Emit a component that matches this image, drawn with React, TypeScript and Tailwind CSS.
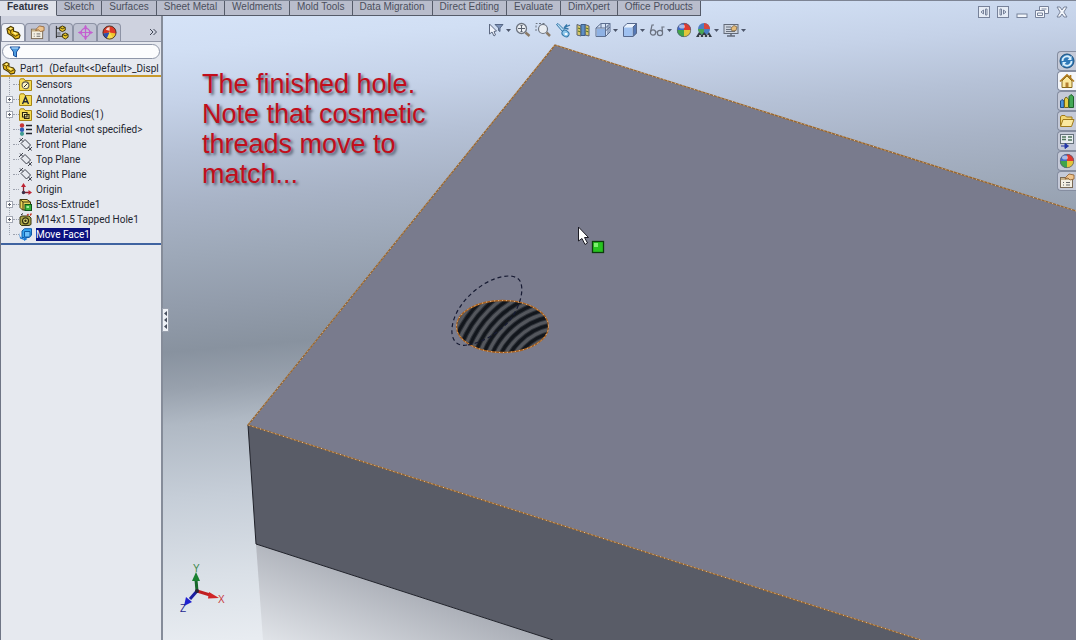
import React, { useState } from "react";

const Tabs = [
  "Features",
  "Sketch",
  "Surfaces",
  "Sheet Metal",
  "Weldments",
  "Mold Tools",
  "Data Migration",
  "Direct Editing",
  "Evaluate",
  "DimXpert",
  "Office Products",
];

type IconProps = { className?: string };

const PartIcon = ({ className = "w-4 h-4" }: IconProps) => (
  <svg viewBox="0 0 16 16" className={className} aria-hidden="true">
    <path d="M1 4 L5 1.500 L8 3 L8 6.500 L13 8 L15 11 L14 14 L10 15 L7 12 L2 9 Z" fill="#e8b91c" stroke="#4a3a08" strokeWidth="1.2" />
    <path d="M2 4.500 L5 6 L8 4 M5 6 L5 9 L10 12 L14 10" fill="none" stroke="#4a3a08" strokeWidth="1" />
    <path d="M3 4 L5 2.700 L7 3.500 L5 4.800 Z M7 8 L9 7.500 L12 9 L10 10.500 Z" fill="#fff08a" />
  </svg>
);

const PropertyIcon = ({ className = "w-4 h-4" }: IconProps) => (
  <svg viewBox="0 0 16 16" className={className} aria-hidden="true">
    <rect x="1.500" y="4.500" width="12" height="10" fill="#f4efe2" stroke="#7b6a55" />
    <path d="M2 5 H13 V7 H2 Z" fill="#c9b48c" />
    <path d="M4 9.500 H5 M7 9.500 H11 M4 12 H5 M7 12 H11" stroke="#666" />
    <path d="M7 4 L10 1 L15 2 L15 6 L11 7 L9 5 L6 6 Z" fill="#eec48e" stroke="#8b5a2b" strokeWidth=".8" />
  </svg>
);

const ConfigIcon = ({ className = "w-4 h-4" }: IconProps) => (
  <svg viewBox="0 0 16 16" className={className} aria-hidden="true">
    <path d="M2.500 1 V14 M2.500 3.500 H6 M2.500 12 H9" stroke="#222" fill="none" />
    <path d="M6 2.500 L9 1 L12 2.500 V5.500 L9 7 L6 5.500 Z" fill="#e8c52a" stroke="#3b3208" />
    <path d="M9 10 L12 8.500 L15 10 V13 L12 15 L9 13 Z" fill="#e8c52a" stroke="#3b3208" />
    <path d="M6 2.500 L9 4 L12 2.500 M9 10 L12 11.500 L15 10" fill="none" stroke="#3b3208" />
    <path d="M3.500 7.500 H7 V10.500 H3.500 Z" fill="#8c8f98" />
  </svg>
);

const TargetIcon = ({ className = "w-4 h-4" }: IconProps) => (
  <svg viewBox="0 0 16 16" className={className} fill="none" stroke="#c45fd0" aria-hidden="true">
    <circle cx="8" cy="8" r="4.500" strokeWidth="1.300" />
    <path d="M8 .5 V15.500 M.5 8 H15.500" strokeWidth="1.300" />
    <path d="M8 0 L6 3 H10 Z M8 16 L6 13 H10 Z M0 8 L3 6 V10 Z M16 8 L13 6 V10 Z" fill="#c45fd0" stroke="none" />
  </svg>
);

const BallIcon = ({ className = "w-4 h-4" }: IconProps) => (
  <svg viewBox="0 0 16 16" className={className} aria-hidden="true">
    <circle cx="8" cy="8" r="7" fill="#4169c8" />
    <path d="M8 8 L8 1 A7 7 0 0 1 15 8 Z" fill="#df3a30" />
    <path d="M8 8 L15 8 A7 7 0 0 1 8 15 Z" fill="#e3c53a" />
    <path d="M8 8 L8 15 A7 7 0 0 1 1 8 Z" fill="#3fa54a" />
    <circle cx="8" cy="8" r="6.700" fill="none" stroke="#5b5f70" strokeWidth=".7" />
    <ellipse cx="6" cy="4.500" rx="3" ry="2" fill="#fff" opacity=".55" />
  </svg>
);

const DisplayIcon = ({ className = "w-4 h-4" }: IconProps) => (
  <svg viewBox="0 0 16 16" className={className} aria-hidden="true">
    <circle cx="8" cy="8" r="7" fill="#f0c62c" />
    <path d="M8 8 L8 1 A7 7 0 0 1 15 9 Z" fill="#e03a28" />
    <path d="M8 8 L1 9 A7 7 0 0 1 8 1 Z" fill="#d63324" />
    <path d="M8 7 L12 14 A7 7 0 0 1 4 14 Z" fill="#f7dc4c" />
    <path d="M1 9 A7 7 0 0 0 5 14.500 L8 8 Z" fill="#2c4fae" />
    <path d="M4 5 A5 5 0 0 1 8 2 L8 6 Z" fill="#fff" opacity=".8" />
    <circle cx="8" cy="8" r="7" fill="none" stroke="#3c2a2a" strokeWidth=".9" />
  </svg>
);

const Folder = ({ children }: { children?: React.ReactNode }) => (
  <svg viewBox="0 0 13 13" className="w-[13px] h-[13px]" aria-hidden="true">
    <path d="M.5 2.500 V12.500 H12.500 V2.500 H6 L5 .8 H1.500 Z" fill="#f5dc55" stroke="#a58413" />
    {children}
  </svg>
);

const SensorsIcon = () => (
  <Folder>
    <circle cx="6.500" cy="7.300" r="3.400" fill="#fff7c8" stroke="#5d5a52" strokeWidth="1.100" />
    <path d="M5 9 L8.500 5.500" stroke="#222" />
  </Folder>
);

const AnnotationsIcon = () => (
  <Folder>
    <path d="M3.500 11 L6.500 4 L9.500 11 M4.500 8.700 H8.500" fill="none" stroke="#20263a" strokeWidth="1.400" />
  </Folder>
);

const BodiesIcon = () => (
  <Folder>
    <path d="M3.500 4.500 H8 V9 H3.500 Z M5.500 6.500 H10 V10.500 H5.500 Z" fill="#f8eda0" stroke="#2a2410" strokeWidth="1.100" />
  </Folder>
);

const MaterialIcon = () => (
  <svg viewBox="0 0 13 13" className="w-[13px] h-[13px]" aria-hidden="true">
    <circle cx="3" cy="2.500" r="2.200" fill="#c93434" />
    <circle cx="3" cy="6.700" r="2.200" fill="#2f58b8" />
    <circle cx="3" cy="10.800" r="2.100" fill="#3f9c93" />
    <path d="M7 2.500 H13 M7 6.500 H13 M7 10.500 H13" stroke="#22252e" strokeWidth="1.500" />
  </svg>
);

const PlaneIcon = () => (
  <svg viewBox="0 0 13 13" className="w-[13px] h-[13px]" fill="none" stroke="#3b3f4a" aria-hidden="true">
    <path d="M2 5.500 L6 1.500 L11.500 7 L7.500 11 Z" />
    <path d="M0 4 L4 0 M1 .5 L4 3.500 M9 13 L13 9 M9.500 9 L12.500 12.500" />
  </svg>
);

const OriginIcon = () => (
  <svg viewBox="0 0 13 13" className="w-[13px] h-[13px]" aria-hidden="true">
    <path d="M4.500 9.500 V3 M4.500 9.500 H10" stroke="#8c2230" strokeWidth="1.300" />
    <path d="M4.500 0 L2 4 H7 Z M13 9.500 L9.500 7 V12 Z" fill="#c02434" />
    <circle cx="4.500" cy="9.500" r="1.700" fill="#3c3048" />
  </svg>
);

const ExtrudeIcon = () => (
  <svg viewBox="0 0 13 13" className="w-[13px] h-[13px]" aria-hidden="true">
    <path d="M1 1.500 H8 L11.500 4 V12 H3.500 L1 9.500 Z" fill="#ead65a" stroke="#40380c" />
    <path d="M1 1.500 L4 4 H11.500 M4 4 V12" fill="none" stroke="#40380c" />
    <rect x="6" y="6.500" width="6.500" height="6" fill="#38b13c" stroke="#10561a" />
    <rect x="7.500" y="8" width="2.500" height="2" fill="#a8f0a0" />
  </svg>
);

const HoleIcon = () => (
  <svg viewBox="0 0 13 13" className="w-[13px] h-[13px]" aria-hidden="true">
    <path d="M1 4 L3 3 H10 L12 5 V11.500 L10 12.500 H2.500 L1 11 Z" fill="#a9a344" stroke="#393612" />
    <circle cx="6.500" cy="7.800" r="3" fill="#dcd873" stroke="#2f2d12" strokeWidth="1.200" />
    <circle cx="6.500" cy="7.800" r="1.200" fill="#2f2d12" />
    <path d="M8 2.500 L9.500 1 M11 2.500 L12.500 .5" stroke="#c23522" strokeWidth="1.300" />
    <path d="M2 2 L4 .5" stroke="#222" />
  </svg>
);

const MoveFaceIcon = () => (
  <svg viewBox="0 0 13 13" className="w-[13px] h-[13px]" aria-hidden="true">
    <path d="M3 3 L5.500 .7 H12.500 V7 L10 9.500 H3 Z" fill="#35a5ee" stroke="#0f5ca8" />
    <path d="M5.500 3.500 H11 V9 H5.500 Z" fill="#6cc0fa" stroke="#0f5ca8" />
    <path d="M0 4.500 L1.500 9 L5 10.500 V8.500 L8.500 11 L5 13 V12 L1 10.500 Z" fill="#1c7ad2" />
  </svg>
);

const TreeItems = [
  { id: 1, title: "Sensors", icon: SensorsIcon },
  { id: 2, title: "Annotations", icon: AnnotationsIcon, expand: true },
  { id: 3, title: "Solid Bodies(1)", icon: BodiesIcon, expand: true },
  { id: 4, title: "Material <not specified>", icon: MaterialIcon },
  { id: 5, title: "Front Plane", icon: PlaneIcon },
  { id: 6, title: "Top Plane", icon: PlaneIcon },
  { id: 7, title: "Right Plane", icon: PlaneIcon },
  { id: 8, title: "Origin", icon: OriginIcon },
  { id: 9, title: "Boss-Extrude1", icon: ExtrudeIcon, expand: true },
  { id: 10, title: "M14x1.5 Tapped Hole1", icon: HoleIcon, expand: true },
  { id: 11, title: "Move Face1", icon: MoveFaceIcon },
];

const PanelTabs = [
  { title: "FeatureManager", icon: PartIcon },
  { title: "PropertyManager", icon: PropertyIcon },
  { title: "ConfigurationManager", icon: ConfigIcon },
  { title: "DimXpertManager", icon: TargetIcon },
  { title: "DisplayManager", icon: DisplayIcon },
];

/* heads-up view toolbar */
const SelectFilter = () => (
  <svg viewBox="0 0 16 16" className="w-4 h-4" aria-hidden="true">
    <path d="M1.500 2 V12 L4 10 L6 14 L7.500 13 L6 9.500 L8.500 9 Z" fill="#eef2fa" stroke="#5c6880" />
    <path d="M7 2.500 H15 L12 6 V9.500 L10.500 8.500 V6 Z" fill="#7e93b8" stroke="#4d5d7c" strokeWidth=".9" />
  </svg>
);

const ZoomFit = () => (
  <svg viewBox="0 0 16 16" className="w-4 h-4" aria-hidden="true">
    <circle cx="6.500" cy="6.500" r="5" fill="#e9edf2" stroke="#6d7480" strokeWidth="1.300" />
    <path d="M6.500 3 V10 M3 6.500 H10 M5.500 4 L6.500 3 L7.500 4 M5.500 9 L6.500 10 L7.500 9" fill="none" stroke="#59616e" />
    <path d="M10.500 10.500 L14.500 14" stroke="#8b7a66" strokeWidth="2.500" />
  </svg>
);

const ZoomArea = () => (
  <svg viewBox="0 0 16 16" className="w-4 h-4" aria-hidden="true">
    <path d="M1 9 V1.500 H11" fill="none" stroke="#6d7480" strokeDasharray="2 1.500" />
    <circle cx="8" cy="7" r="4.500" fill="#e9edf2" stroke="#6d7480" strokeWidth="1.200" />
    <path d="M11.500 10.500 L15 14" stroke="#8b7a66" strokeWidth="2.500" />
  </svg>
);

const PreviousView = () => (
  <svg viewBox="0 0 16 16" className="w-4 h-4" aria-hidden="true">
    <path d="M1.500 2.500 L3 1.500 L9 7.500 L7.500 9.500 Z" fill="#b9def4" stroke="#3376a8" />
    <ellipse cx="10.500" cy="11.500" rx="3.700" ry="3" fill="#8fc8ec" stroke="#3376a8" transform="rotate(35 10.500 11.500)" />
    <ellipse cx="11" cy="12" rx="1.500" ry="1" fill="#fff" />
    <path d="M15 3 L9.500 5.500 M9 6 L12 2.500 M9 6 L13.500 7" fill="none" stroke="#3376a8" strokeWidth="1.300" />
  </svg>
);

const SectionView = () => (
  <svg viewBox="0 0 16 16" className="w-4 h-4" aria-hidden="true">
    <path d="M2 2.500 L6 4 V14 L2 13 Z M10 2.500 L14 4 V14 L10 13 Z" fill="#d6c66a" stroke="#5a6270" />
    <path d="M6 2.500 H10 V13.500 H6 Z" fill="#5f8fc4" stroke="#3e5d88" />
    <path d="M11 6 L13.500 7 M11 9 L13.500 10 M3 6 L5.500 7 M3 9 L5.500 10" stroke="#53721f" />
  </svg>
);

const ViewOrientation = () => (
  <svg viewBox="0 0 16 16" className="w-4 h-4" aria-hidden="true">
    <path d="M1 6 L6 1.500 H15 V10 L10.500 14.500 H1 Z" fill="#d5e2f5" stroke="#5d6f90" />
    <path d="M1 6 H10.500 V14.500 M10.500 6 L15 1.500 M6 1.500 V6 M10.500 9 L15 5 M10.500 1.500 V6 M13 3.500 V12" fill="none" stroke="#5d6f90" />
    <rect x="2" y="7" width="8" height="7" fill="#8fb2e4" />
  </svg>
);

const DisplayStyle = () => (
  <svg viewBox="0 0 16 16" className="w-4 h-4" aria-hidden="true">
    <path d="M1.500 5 L5 1.500 H14.500 V11 L11 14.500 H1.500 Z" fill="#e8f1fd" stroke="#56688c" />
    <path d="M11 5 L14.500 1.500 V11 L11 14.500 Z" fill="#5578b5" stroke="#56688c" />
    <rect x="2" y="5.500" width="8.500" height="8.500" fill="#9fc1f0" />
  </svg>
);

const HideShow = () => (
  <svg viewBox="0 0 16 16" className="w-4 h-4" fill="none" stroke="#6b7280" strokeWidth="1.200" aria-hidden="true">
    <circle cx="4" cy="10.500" r="2.600" />
    <circle cx="11" cy="11" r="2.600" />
    <path d="M6.500 10 H8.500 M1.500 10 L3 3 L5 3 M13.500 10 L13 5 L15.500 5" />
  </svg>
);

const SceneIcon = () => (
  <svg viewBox="0 0 16 16" className="w-4 h-4" aria-hidden="true">
    <circle cx="8" cy="7" r="6" fill="#4a7fc4" />
    <path d="M8 7 V1 A6 6 0 0 1 14 7 Z" fill="#d8483e" />
    <path d="M2 7 A6 6 0 0 0 8 13 V7 Z" fill="#4aa552" />
    <path d="M0 15 L3 10 L6 13 L8 10 L11 13 L13 10 L16 15 Z" fill="#353d46" />
    <path d="M3 14 H5 M7 14 H9 M11 14 H13" stroke="#e5eaf0" strokeWidth="1.500" />
  </svg>
);

const ViewSettings = () => (
  <svg viewBox="0 0 16 16" className="w-4 h-4" aria-hidden="true">
    <rect x="1" y="2.500" width="14" height="9" fill="#ced5e0" stroke="#626a78" />
    <path d="M3 5 H8 M3 7.500 H8 M3 9.500 H12" stroke="#69717e" />
    <path d="M8 6 L11 3.500 L14 5 L13 8.500 L9 9 Z" fill="#e6bd7c" stroke="#7c6440" strokeWidth=".8" />
    <path d="M4 14 H12 M8 12 V14" stroke="#626a78" strokeWidth="1.500" />
  </svg>
);

const ViewTools = [
  { title: "Selection Filter", icon: SelectFilter, menu: true },
  { title: "Zoom to Fit", icon: ZoomFit },
  { title: "Zoom to Area", icon: ZoomArea },
  { title: "Previous View", icon: PreviousView },
  { title: "Section View", icon: SectionView },
  { title: "View Orientation", icon: ViewOrientation, menu: true },
  { title: "Display Style", icon: DisplayStyle, menu: true },
  { title: "Hide/Show Items", icon: HideShow, menu: true },
  { title: "Edit Appearance", icon: BallIcon },
  { title: "Apply Scene", icon: SceneIcon, menu: true },
  { title: "View Settings", icon: ViewSettings, menu: true },
];

/* task pane */
const ResourcesIcon = () => (
  <svg viewBox="0 0 16 16" className="w-4 h-4" aria-hidden="true">
    <circle cx="8" cy="8" r="7" fill="#2f79b8" stroke="#1d527f" />
    <path d="M3.500 8 A4.500 4.500 0 0 1 11 4.500 M12.500 8 A4.500 4.500 0 0 1 5 11.500" fill="none" stroke="#d9effc" strokeWidth="1.800" />
    <path d="M12.500 2.500 V7 H8.500 Z M3.500 13.500 V9 H7.500 Z" fill="#d9effc" />
  </svg>
);

const HomeIcon = () => (
  <svg viewBox="0 0 16 16" className="w-4 h-4" aria-hidden="true">
    <path d="M3 8 V14.500 H13 V8 L8 3 Z" fill="#fbe9a0" stroke="#8a6a1c" />
    <path d="M1 8.500 L8 2 L15 8.500 M11.500 2 V5" fill="none" stroke="#b07b1e" strokeWidth="1.700" />
    <path d="M6.500 14 V9.500 H9.500 V14" fill="#b58032" />
  </svg>
);

const LibraryIcon = () => (
  <svg viewBox="0 0 16 16" className="w-4 h-4" aria-hidden="true">
    <path d="M1.500 8 L3 6.500 L5 8 V14.500 H1.500 Z" fill="#4b93d8" stroke="#1f4f86" />
    <path d="M5.500 6 L7 4 L9.500 6 V14.500 H5.500 Z" fill="#e5cf48" stroke="#75641a" />
    <path d="M10 3.500 L12 1.500 L14.500 3.500 V14.500 H10 Z" fill="#43a856" stroke="#1c6229" />
  </svg>
);

const ExplorerIcon = () => (
  <svg viewBox="0 0 16 16" className="w-4 h-4" aria-hidden="true">
    <path d="M1.500 13 V3.500 L3 2.500 H6 L7.500 4 H13 V6" fill="#f3d774" stroke="#a07a1a" />
    <path d="M1.500 13.500 L4 6.500 H15 L12.500 13.500 Z" fill="#fbe9a0" stroke="#a07a1a" />
  </svg>
);

const PaletteIcon = () => (
  <svg viewBox="0 0 16 16" className="w-4 h-4" aria-hidden="true">
    <rect x="1.500" y="1.500" width="13" height="9" fill="#e7ecf0" stroke="#66717c" />
    <path d="M3 4 H7 M3 6.500 H7 M9 4 H13 M9 7 H13" stroke="#50745c" strokeWidth="1.500" />
    <path d="M2 13 H8 M6 10.500 L9.500 13 L6 15.500 Z" fill="#2236a8" stroke="#2236a8" />
  </svg>
);

const TaskTabs = [
  { title: "Resources", icon: ResourcesIcon },
  { title: "Home", icon: HomeIcon },
  { title: "Design Library", icon: LibraryIcon },
  { title: "File Explorer", icon: ExplorerIcon },
  { title: "View Palette", icon: PaletteIcon },
  { title: "Appearances", icon: BallIcon },
  { title: "Custom Properties", icon: PropertyIcon },
];

const WindowControls = () => (
  <div className="absolute right-2 top-[5px] z-10 flex gap-[7px]">
    <button aria-label="Dock left">
      <svg viewBox="0 0 12 12" className="w-3 h-3" fill="none" stroke="#77829a">
        <rect x=".5" y=".5" width="11" height="11" fill="#e6ecf6" />
        <path d="M3 6 L5.500 4 V8 Z M7.500 3 H9 V9 H7.500 Z" />
      </svg>
    </button>
    <button aria-label="Dock right">
      <svg viewBox="0 0 12 12" className="w-3 h-3" fill="none" stroke="#77829a">
        <rect x=".5" y=".5" width="11" height="11" fill="#e6ecf6" />
        <path d="M9 6 L6.500 4 V8 Z M3 3 H4.500 V9 H3 Z" />
      </svg>
    </button>
    <button aria-label="Minimize">
      <svg viewBox="0 0 12 12" className="w-3 h-3">
        <rect x="1" y="8" width="10" height="3.500" fill="#f3f6fb" stroke="#77829a" />
      </svg>
    </button>
    <button aria-label="Restore">
      <svg viewBox="0 0 14 12" className="w-3.5 h-3" fill="#f3f6fb" stroke="#77829a">
        <path d="M4.500 .5 H13.500 V7.500 H4.500 Z M6.500 3 H11.500" />
        <path d="M.5 4.500 H9.500 V11.500 H.5 Z" />
        <path d="M2.500 7 H7.500 V9.500 H2.500 Z" />
      </svg>
    </button>
    <button aria-label="Close">
      <svg viewBox="0 0 12 12" className="w-3 h-3">
        <path d="M1 1 H4 L6 4 L8 1 H11 L7.800 6 L11 11 H8 L6 8 L4 11 H1 L4.200 6 Z" fill="#f3f6fb" stroke="#77829a" />
      </svg>
    </button>
  </div>
);

const threads = Array.from({ length: 15 }, (_, i) => 16 + i * 8);

const Model = () => (
  <svg
    viewBox="163 16 913 624"
    preserveAspectRatio="xMinYMin slice"
    className="absolute inset-0 w-full h-full"
    aria-label="Part model"
  >
    <defs>
      <clipPath id="hole">
        <ellipse cx="502.500" cy="326.500" rx="46" ry="26" />
      </clipPath>
      <linearGradient id="floor" gradientUnits="userSpaceOnUse" x1="380" y1="560" x2="330" y2="690">
        <stop offset="0" stopColor="#a3a7b0" />
        <stop offset="1" stopColor="#eceff3" />
      </linearGradient>
    </defs>

    <path d="M256 544 L553 640 L263 640 Z" fill="url(#floor)" />
    <path d="M248 425 L256 544 L553 640 L921 640 Z" fill="#595c67" />
    <path d="M555 45 L1076 211 V640 H921 L248 425 Z" fill="#797b8d" />
    <path d="M248 425 L256 544 L553 640" fill="none" stroke="#20222a" />
    <path d="M1076 211 L555 45 L248 425 L921 640" fill="none" stroke="#96652f" strokeWidth="1.300" />
    <path d="M1076 211 L555 45 L248 425 L921 640" fill="none" stroke="#ecc99c" strokeDasharray="1 3" />

    {/* tapped hole with cosmetic thread */}
    <g clipPath="url(#hole)" fill="none">
      <rect x="450" y="295" width="105" height="65" fill="#12161c" />
      {threads.map((r) => (
        <g key={r}>
          <circle cx="562" cy="384" r={r} stroke="#2f333a" strokeWidth="5" />
          <circle cx="562" cy="384" r={r} stroke="#54575d" strokeWidth="3" />
        </g>
      ))}
    </g>
    <ellipse cx="502.500" cy="326.500" rx="46" ry="26" fill="none" stroke="#a8601e" strokeWidth="1.300" />
    <ellipse cx="502.500" cy="326.500" rx="46" ry="26" fill="none" stroke="#f0cfa4" strokeDasharray="1 3" />
    <path
      d="M467 345 C456 347 451 339 452 328 C454 310 468 294 484 284 C499 275 515 273 520 281 C525 291 519 308 510 320 C499 333 482 343 467 345"
      fill="none"
      stroke="#171b33"
      strokeWidth="1.200"
      strokeDasharray="4 3"
    />

    {/* pointer */}
    <path d="M578.500 227 V241 L582 238.500 L585 244.500 L587.500 243 L584.500 237.500 H588.500 Z" fill="#fff" stroke="#1c1c24" />
    <rect x="592.500" y="241.500" width="11" height="11" fill="#27c41f" stroke="#0c3c0c" strokeWidth="1.300" />
    <rect x="594" y="243" width="4" height="4" fill="#7df06e" />

    {/* triad */}
    <g strokeWidth="3" fontFamily="Liberation Sans, sans-serif" fontSize="10">
      <path d="M197 591 L196 580" stroke="#17682a" />
      <path d="M196 572 L192 581 H200 Z" fill="#188030" />
      <path d="M197 591 L210 595" stroke="#c01f22" />
      <path d="M219 598 L209 592 L208 598.500 Z" fill="#d02426" />
      <path d="M197 591 L190 599" stroke="#1c1ea0" />
      <path d="M184 606 L186 597 L192 602 Z" fill="#2022d0" />
      <circle cx="197" cy="591" r="2" fill="#2b2438" />
      <text x="193" y="572" fill="#3d8a4c">Y</text>
      <text x="218" y="603" fill="#c83a40">X</text>
      <text x="180" y="612" fill="#24268f">Z</text>
    </g>
  </svg>
);

const FeaturePanel = () => {
  const [activePanel, setActivePanel] = useState(0);
  const [selected, setSelected] = useState(11);

  return (
    <aside className="relative flex w-[163px] shrink-0 flex-col border-l border-[#6f7585] border-r-2 border-r-[#858c99] bg-[#e6e9ef] font-[Roboto,'Open_Sans',sans-serif] text-[10px] text-[#23262f]">
      <div className="bg-[#ced2df] pt-[7px]">
        <div className="flex h-[19px] items-end border-b border-[#9298a8]">
          {PanelTabs.map((tab, index) => (
            <button
              key={tab.title}
              aria-label={tab.title}
              onClick={() => setActivePanel(index)}
              className={`flex h-[18px] w-6 items-center justify-center rounded-t border border-b-0 border-[#8d93a5] ${
                activePanel === index ? "bg-[#f1f3f7]" : "bg-[#bfc3d2]"
              }`}
            >
              <tab.icon className="w-[15px] h-[15px]" />
            </button>
          ))}
          <button aria-label="More tabs" className="ml-auto mr-1 h-[18px] w-2">
            <svg viewBox="0 0 8 8" className="w-2 h-2" fill="none" stroke="#3f4554">
              <path d="M1 1 L4 4 L1 7 M4.500 1 L7.500 4 L4.500 7" />
            </svg>
          </button>
        </div>
      </div>

      <div className="px-px py-0.5">
        <label className="flex h-[15px] items-center rounded-full border border-[#8e96a8] bg-[#fbfcfd] px-1">
          <svg viewBox="0 0 12 12" className="ml-0.5 w-3 h-3" aria-hidden="true">
            <path d="M1 1 H11 L7.500 6 V11 L4.500 9.500 V6 Z" fill="#4c9be0" stroke="#1c4f98" />
            <path d="M2.500 2 H9" stroke="#c5e6ff" />
          </svg>
          <input aria-label="Filter tree" className="min-w-0 flex-1 bg-transparent outline-none" />
        </label>
      </div>

      <div className="flex h-4 items-center gap-1 whitespace-pre border-b-2 border-[#c79a2c] pl-px">
        <PartIcon className="w-[14px] h-[14px] shrink-0" />
        <span>Part1  (Default&lt;&lt;Default&gt;_Displ</span>
      </div>

      <ul className="relative border-b-2 border-[#3f63a0] pb-px">
        <li aria-hidden="true" className="absolute bottom-2 left-2 top-0 border-l border-dotted border-[#9da2ae]" />
        {TreeItems.map((item) => (
          <li key={item.id} className="relative flex h-[15px] items-center pl-[5px]">
            {item.expand ? (
              <button
                aria-label={`Expand ${item.title}`}
                className="relative flex h-[7px] w-[7px] items-center justify-center border border-[#a3a8b3] bg-white"
              >
                <svg viewBox="0 0 5 5" className="w-[5px] h-[5px] shrink-0" stroke="#5a5f6c">
                  <path d="M1 2.500 H4 M2.500 1 V4" />
                </svg>
              </button>
            ) : (
              <span className="w-[7px]" />
            )}
            <span className="w-[6px] border-t border-dotted border-[#9da2ae]" />
            <item.icon />
            <button
              onClick={() => setSelected(item.id)}
              className={`ml-1 h-[13px] whitespace-nowrap leading-[13px] ${
                selected === item.id ? "bg-[#0a1280] text-white" : ""
              }`}
            >
              {item.title}
            </button>
          </li>
        ))}
      </ul>

      <button
        aria-label="Collapse panel"
        className="absolute -right-2 top-[292px] z-10 flex h-6 w-[7px] items-center justify-center border border-[#9aa1ae] bg-[#eef1f6]"
      >
        <svg viewBox="0 0 5 20" className="w-[5px] h-5" fill="#4a5160">
          <path d="M4 1 V6 L1 3.500 Z M4 7.500 V12.500 L1 10 Z M4 14 V19 L1 16.500 Z" />
        </svg>
      </button>
    </aside>
  );
};

const App = () => {
  const [activeTab, setActiveTab] = useState("Features");

  return (
    <div className="flex min-h-screen flex-col overflow-hidden bg-[linear-gradient(175deg,#d9e6fa_0%,#d1dff4_9%,#c5d2e8_16%,#b5c1d6_23%,#a8b3c6_30%,#9da8b8_37%,#929cab_44%,#88929f_50%,#98a1ad_55%,#b0b9c4_60%,#c6ced8_70%,#dae0e7_81%,#e8ecf1_90%,#edf0f4_100%)]">
      <header className="relative h-4 border-t border-[#7d8494]">
        <nav className="flex w-fit font-['Liberation_Sans',Arial,sans-serif] text-[10px] text-[#4b4f5c]">
          {Tabs.map((tab) => (
            <button
              key={tab}
              onClick={() => setActiveTab(tab)}
              className={`h-[15px] whitespace-nowrap border-r border-b border-[#555b69] px-[7px] pb-0.5 leading-[12px] ${
                activeTab === tab ? "border-b-[#dfe2ea] bg-[#dfe2ea] font-bold text-[#2f333f]" : "bg-[#b9bdcc]"
              }`}
            >
              {tab}
            </button>
          ))}
        </nav>
        <WindowControls />
      </header>

      <div className="flex flex-1">
        <FeaturePanel />

        <main className="relative flex-1">
          <Model />

          <div className="relative flex justify-center gap-1 pr-1.5 pt-1.5">
            {ViewTools.map((tool) => (
              <button key={tool.title} aria-label={tool.title} className="flex items-center gap-0.5">
                <tool.icon />
                {tool.menu && (
                  <svg viewBox="0 0 5 3" className="w-[5px] h-[3px]" fill="#4d566b">
                    <path d="M0 0 H5 L2.500 3 Z" />
                  </svg>
                )}
              </button>
            ))}
          </div>

          <p className="absolute left-[39px] top-[53px] w-[232px] font-['Liberation_Sans',Arial,sans-serif] text-[27px] leading-[30px] text-[#c20e1b] [text-shadow:2px_2px_3px_#4c5568]">
            The finished hole. Note that cosmetic threads move to match...
          </p>

          <div className="absolute right-0 top-[35px] flex flex-col">
            {TaskTabs.map((tab) => (
              <button
                key={tab.title}
                aria-label={tab.title}
                className={`flex h-5 w-[19px] items-center justify-center rounded-l-sm border border-r-0 border-[#858da0] ${
                  tab.title === "Home" ? "bg-[#f4f6fa]" : "bg-[#c5cad8]"
                }`}
              >
                <tab.icon />
              </button>
            ))}
          </div>
        </main>
      </div>
    </div>
  );
};

export default App;
